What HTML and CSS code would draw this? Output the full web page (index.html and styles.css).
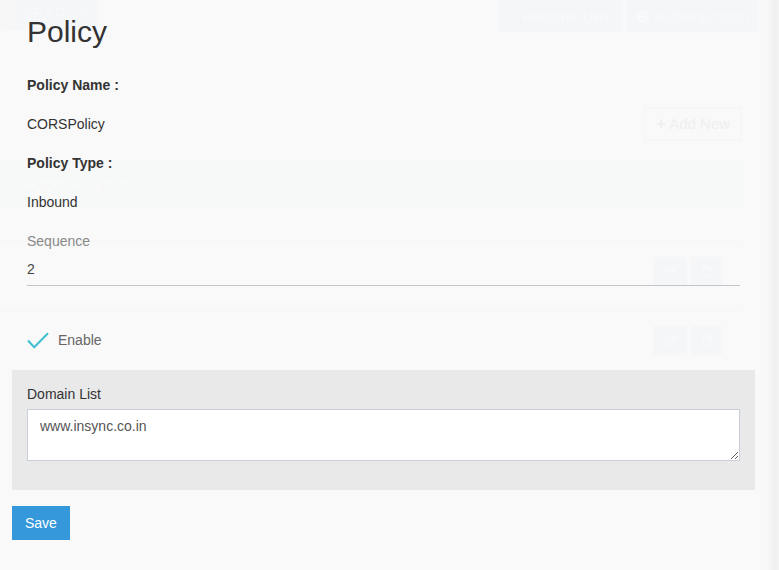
FILE: index.html
```html
<!DOCTYPE html>
<html lang="en">
<head>
<meta charset="utf-8">
<title>Policy</title>
<link rel="stylesheet" href="styles.css">
</head>
<body>
<div class="app">
  <header class="app-top">
    <div class="app-left">
      <span class="app-edge"></span>
      <button class="ghost-btn search-btn">SEARCH</button>
    </div>
    <div class="app-actions">
      <button class="ghost-btn reg-btn"><span class="ghost-icon">®</span> Register URL</button>
      <button class="ghost-btn auth-btn"><svg class="ghost-svg" viewBox="0 0 14 14" width="13" height="13"><circle cx="7" cy="7" r="6.5" fill="#f9fafb"/><path d="M4 7a3 3 0 1 0 1-2.2" fill="none" stroke="#f4f6f8" stroke-width="1.4"/><path d="M3.4 3.2v2.4h2.4z" fill="#f4f6f8"/></svg> Authentication</button>
    </div>
  </header>
  <div class="app-toolbar">
    <button class="add-btn"><span class="add-plus">+</span> Add New</button>
  </div>
  <div class="app-table">
    <div class="t-head">r swagger endpoint</div>
    <div class="t-row">
      <span class="icon-btn"><svg viewBox="0 0 14 14" width="13" height="13"><path d="M2 3h6M2 3v9h9V7" fill="none" stroke="#f8f9fa" stroke-width="1.4"/><path d="M6 9l1-3 5-5 2 2-5 5z" fill="#f8f9fa"/></svg></span>
      <span class="icon-btn"><svg viewBox="0 0 14 14" width="12" height="13"><path d="M1 3h12M5 3V1h4v2M2.5 3l1 10h7l1-10" fill="none" stroke="#f8f9fa" stroke-width="1.4"/></svg></span>
    </div>
    <div class="t-row">
      <span class="icon-btn"><svg viewBox="0 0 14 14" width="13" height="13"><path d="M2 3h6M2 3v9h9V7" fill="none" stroke="#f8f9fa" stroke-width="1.4"/><path d="M6 9l1-3 5-5 2 2-5 5z" fill="#f8f9fa"/></svg></span>
      <span class="icon-btn"><svg viewBox="0 0 14 14" width="12" height="13"><path d="M1 3h12M5 3V1h4v2M2.5 3l1 10h7l1-10" fill="none" stroke="#f8f9fa" stroke-width="1.4"/></svg></span>
    </div>
  </div>
</div>

<section class="panel">
  <h1 class="panel-title">Policy</h1>
  <div class="fields">
    <dl class="details">
      <dt>Policy Name :</dt>
      <dd>CORSPolicy</dd>
      <dt>Policy Type :</dt>
      <dd>Inbound</dd>
    </dl>
    <div class="field">
      <label class="field-label">Sequence</label>
      <div class="field-input">2</div>
    </div>
    <div class="check-row">
      <svg class="check-icon" viewBox="0 0 22 17" width="22" height="17"><polyline points="1,8.5 7.2,15.2 21,1.2" fill="none" stroke="#3fbfcf" stroke-width="2"/></svg>
      <span class="check-label">Enable</span>
    </div>
  </div>
  <div class="domain-box">
    <label class="domain-label">Domain List</label>
    <textarea class="domain-input">www.insync.co.in</textarea>
  </div>
  <button class="save-btn">Save</button>
</section>
</body>
</html>
```

FILE: styles.css
```css
html {
  background: linear-gradient(to right, #f9f9f9 0, #f9f9f9 766px, #efefef 776px, #f4f4f4 779px);
  min-height: 100%;
}

body {
  margin: 0;
  min-height: 570px;
  font-family: "Liberation Sans", Arial, sans-serif;
  font-size: 14px;
  color: #333;
  position: relative;
  overflow: hidden;
}

/* ---------- faded background application ---------- */
.app {
  width: 779px;
}

.app-top {
  display: flex;
  justify-content: space-between;
  align-items: flex-start;
  height: 31px;
}

.app-left {
  display: flex;
}

.app-edge {
  display: block;
  width: 14px;
  height: 30px;
  background: #f7f7f7;
}

.ghost-btn {
  border: 0;
  background: #f4f6f8;
  color: #f9fafb;
  font-family: "Liberation Sans", Arial, sans-serif;
  font-size: 15px;
  height: 31px;
  padding: 0;
  display: flex;
  align-items: center;
  justify-content: center;
  gap: 4px;
}

.search-btn {
  width: 83px;
  height: 30px;
  font-size: 16px;
  color: #f8f9fa;
}

.app-actions {
  display: flex;
  gap: 5px;
  padding-right: 21px;
}

.reg-btn {
  width: 123px;
  height: 32px;
}

.auth-btn {
  width: 131px;
  height: 32px;
}

.ghost-icon {
  font-size: 14px;
}

.app-toolbar {
  display: flex;
  justify-content: flex-end;
  padding-right: 37px;
  margin-top: 76px;
}

.add-btn {
  width: 98px;
  height: 34px;
  border: 1px solid #f4f4f4;
  background: transparent;
  color: #efefef;
  font-family: "Liberation Sans", Arial, sans-serif;
  font-size: 15px;
  padding: 0;
}

.add-plus {
  font-weight: bold;
  font-size: 17px;
}

.app-table {
  width: 742px;
  margin-top: 19px;
}

.t-head {
  height: 48px;
  background: #f7f8f8;
  color: #fbfbfb;
  font-size: 15px;
  line-height: 20px;
  padding: 14px 0 0 0;
  box-sizing: border-box;
  margin-bottom: 33px;
}

.t-row {
  display: flex;
  justify-content: flex-end;
  gap: 4px;
  border-top: 1px solid #f6f6f6;
  height: 69px;
  padding: 15px 20px 0 0;
  box-sizing: border-box;
}

.icon-btn {
  display: flex;
  align-items: center;
  justify-content: center;
  width: 34px;
  height: 29px;
  background: #f4f6f8;
}

.icon-btn + .icon-btn {
  width: 31px;
}

/* ---------- policy panel (overlay) ---------- */
.panel {
  position: absolute;
  top: 0;
  left: 0;
  width: 767px;
  padding: 0 12px;
  box-sizing: border-box;
}

.panel-title {
  margin: 15px 0 0 15px;
  font-size: 30px;
  line-height: 33px;
  font-weight: normal;
  color: #333;
}

.fields {
  padding: 0 15px;
  margin-top: 27px;
}

.details {
  margin: 0;
}

.details dt,
.details dd {
  margin: 0 0 19px 0;
  line-height: 20px;
}

.details dt {
  font-weight: bold;
  color: #333;
}

.details dd {
  color: #333;
}

.field-label {
  display: block;
  line-height: 20px;
  color: #888;
}

.field-input {
  margin-top: 8px;
  line-height: 20px;
  padding-bottom: 6px;
  border-bottom: 1px solid #c3c6cc;
  color: #444;
}

.check-row {
  display: flex;
  align-items: center;
  gap: 9px;
  height: 20px;
  margin-top: 44px;
}

.check-icon {
  display: block;
}

.check-label {
  color: #666;
  line-height: 20px;
}

.domain-box {
  margin-top: 20px;
  background: #e9e9e9;
  padding: 14px 15px 29px;
}

.domain-label {
  display: block;
  line-height: 20px;
  color: #333;
}

.domain-input {
  display: block;
  margin-top: 5px;
  width: 100%;
  height: 52px;
  box-sizing: border-box;
  border: 1px solid #c8cfd9;
  border-radius: 0;
  background: #fff;
  padding: 6px 12px;
  font-family: "Liberation Sans", Arial, sans-serif;
  font-size: 14px;
  line-height: 20px;
  color: #555;
  resize: vertical;
  outline: none;
}

.save-btn {
  display: block;
  margin-top: 16px;
  height: 34px;
  padding: 0 13px;
  border: 0;
  border-radius: 0;
  background: #3498db;
  color: #fff;
  font-family: "Liberation Sans", Arial, sans-serif;
  font-size: 14px;
}
```
